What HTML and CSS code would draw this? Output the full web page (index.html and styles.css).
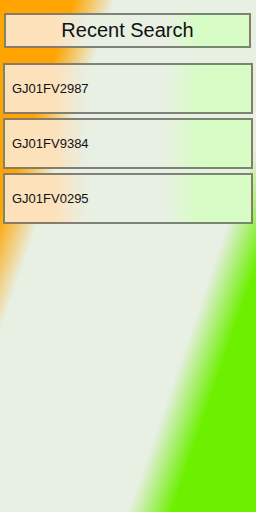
FILE: index.html
```html
<!DOCTYPE html>
<html lang="en">
<head>
  <meta charset="UTF-8" />
  <meta name="viewport" content="width=device-width, initial-scale=1.0"/>
  <title>Recent Search</title>
  <link rel="stylesheet" href="styles.css">
</head>
<body>

  <div class="header">Recent Search</div>

  <div class="list">
    <div class="item">GJ01FV2987</div>
    <div class="item">GJ01FV9384</div>
    <div class="item">GJ01FV0295</div>
  </div>

</body>
</html>
```

FILE: styles.css
```css
html, body {
  height: 100%;
}

body {
  margin: 0;
  padding: 13px 3px 0;
  box-sizing: border-box;
  font-family: 'Liberation Sans', Arial, sans-serif;
  color: #111;
  background: linear-gradient(109deg, #ffa400 17%, #e8efe3 26.5%, #e8efe3 70.5%, #6cf000 80.5%);
}

.header {
  margin: 0 2px 0 1px;
  height: 35px;
  display: flex;
  align-items: center;
  justify-content: center;
  font-size: 20px;
  border: 2px solid rgba(40, 40, 40, 0.55);
  box-sizing: border-box;
  background: linear-gradient(to right, #fde1bb 20%, #e8efe3 33%, #e8efe3 65%, #d8fcc6 78%);
}

.list {
  margin-top: 15px;
  display: flex;
  flex-direction: column;
  gap: 4px;
}

.item {
  height: 51px;
  display: flex;
  align-items: center;
  padding: 0 7px;
  font-size: 13px;
  border: 2px solid rgba(40, 40, 40, 0.55);
  box-sizing: border-box;
  background: linear-gradient(to right, #fde1bb 20%, #e8efe3 33%, #e8efe3 65%, #d8fcc6 78%);
}
```
